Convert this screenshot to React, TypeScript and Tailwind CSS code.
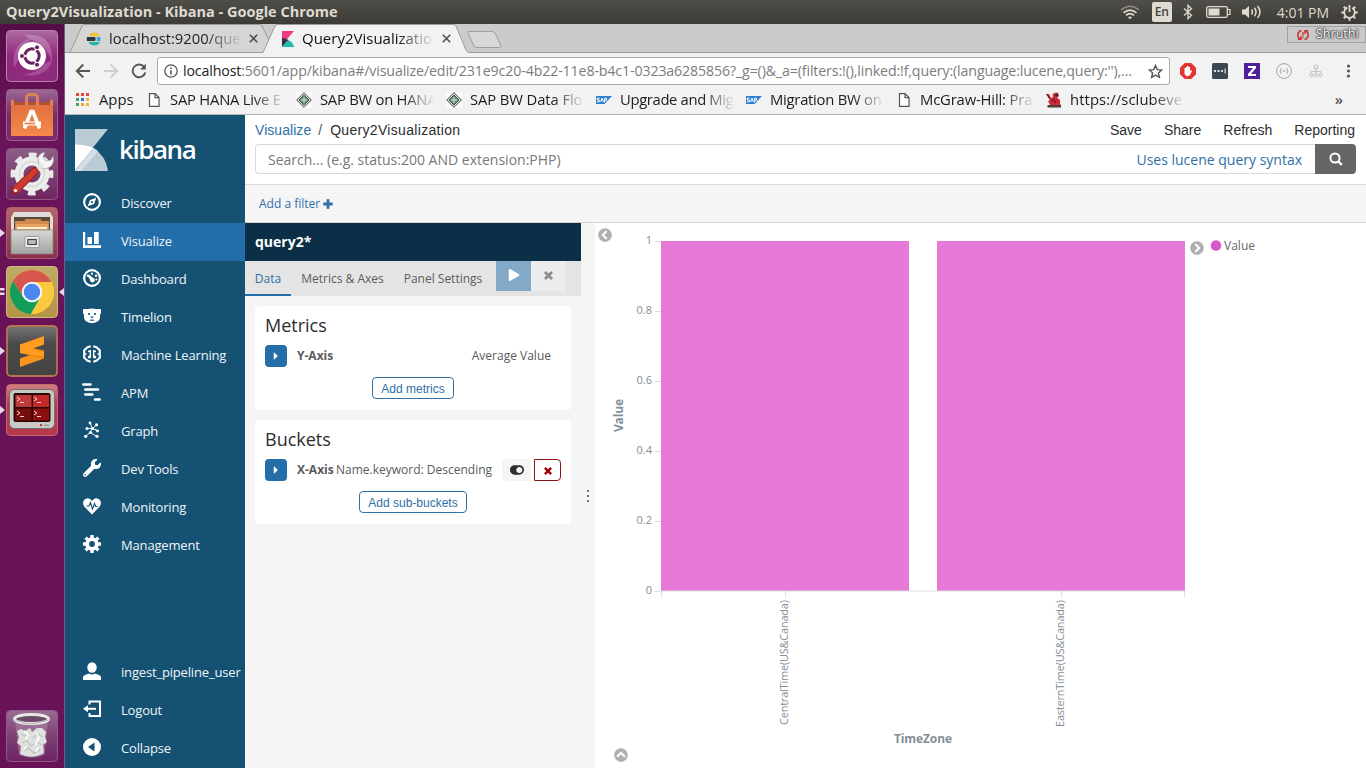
import React from "react";
import {
  FaCaretRight,
  FaChevronCircleLeft,
  FaChevronCircleRight,
  FaChevronCircleUp,
  FaPlay,
  FaToggleOn,
  FaWrench,
} from "react-icons/fa";

const FADE = "[mask-image:linear-gradient(to_right,black_72%,transparent_100%)]";

/* ---------- System bar ---------- */

function SystemBar() {
  return (
    <header className="flex h-6 shrink-0 items-center bg-linear-to-b from-[#504e48] to-[#3d3b36] pr-2 pl-[6px] text-[#dfdbd2]">
      <span className="text-[14.5px] font-bold tracking-[0.01px] whitespace-nowrap">
        Query2Visualization - Kibana - Google Chrome
      </span>
      <div className="ml-auto flex items-center">
        <svg className="mr-[12px] h-[15px] w-5" viewBox="0 0 20 15" fill="none" stroke="currentColor" strokeWidth="1.6">
          <path d="M1 5Q10-2.500 19 5" opacity=".45" />
          <path d="M3.500 7.800Q10 2.300 16.500 7.800" />
          <path d="M6 10.400Q10 6.800 14 10.400" />
          <path d="M8 12.200Q10 10.600 12 12.200L10 14.300Z" fill="currentColor" stroke="none" />
        </svg>
        <span className="mr-[10px] flex h-5 w-5 items-center justify-center rounded-[2px] bg-[#dfdbd2] text-[12px] font-semibold text-[#45433e]">
          En
        </span>
        <svg className="mr-3 h-4 w-3" viewBox="0 0 12 16" fill="none" stroke="currentColor" strokeWidth="1.3">
          <path d="M2 4.500L9.500 11.200L6 14.700V1.300L9.500 4.800L2 11.500" />
        </svg>
        <svg className="mr-[11px] h-3 w-[25px]" viewBox="0 0 25 12">
          <rect x=".7" y=".7" width="20.600" height="10.600" rx="1.500" fill="none" stroke="currentColor" strokeWidth="1.300" />
          <rect x="2.500" y="2.500" width="11" height="7" fill="currentColor" />
          <path d="M22 3.500h2v5h-2" fill="none" stroke="currentColor" strokeWidth="1.200" />
        </svg>
        <svg className="mr-[15px] h-[14px] w-5" viewBox="0 0 20 14" fill="none" stroke="currentColor" strokeWidth="1.500">
          <path d="M0 4.500h3L7 1v12L3 9.500H0Z" fill="currentColor" stroke="none" />
          <path d="M9.500 4.500Q11.500 7 9.500 9.500" />
          <path d="M12.500 2.800Q15.500 7 12.500 11.200" />
          <path d="M15.500 1Q20.500 7 15.500 13" />
        </svg>
        <span className="mr-[12px] text-[14px] tracking-[-0.02px] whitespace-nowrap">4:01 PM</span>
        <svg className="h-[17px] w-[17px]" viewBox="0 0 17 17" fill="none" stroke="currentColor">
          <circle cx="8.500" cy="8.500" r="5.300" strokeWidth="1.800" strokeDasharray="27.700 5.600" transform="rotate(-60 8.500 8.500)" />
          <path d="M8.500 1V8" strokeWidth="1.800" />
          <path
            d="M2.800 2.800L4.500 4.500M14.200 2.800L12.500 4.500M.3 8.500H3M14 8.500H16.700M2.800 14.200L4.500 12.500M14.200 14.200L12.500 12.500M8.500 14V16.700"
            strokeWidth="2"
          />
        </svg>
      </div>
    </header>
  );
}

/* ---------- Launcher ---------- */

function UbuntuTile() {
  return (
    <svg viewBox="0 0 52 52" className="block h-[52px] w-[52px]">
      <defs>
        <linearGradient id="ub" x1="0" y1="0" x2="0" y2="1">
          <stop offset="0" stopColor="#ab6ba0" />
          <stop offset=".5" stopColor="#93277f" />
          <stop offset="1" stopColor="#8d2c7b" />
        </linearGradient>
      </defs>
      <rect x=".5" y=".5" width="51" height="51" rx="4" fill="url(#ub)" stroke="#b685ad" />
      <path d="M8 38Q4 14 26 8Q14 16 13 28Z" fill="#fff" opacity=".2" />
      <path d="M18 5Q48 2 46 32Q40 14 26 10Z" fill="#fff" opacity=".22" />
      <path d="M46 30Q42 48 16 45Q34 42 38 34Z" fill="#fff" opacity=".18" />
      <circle cx="26" cy="26" r="14" fill="#fff" />
      <circle cx="26" cy="26" r="7.200" fill="none" stroke="#6b2360" strokeWidth="3" />
      <path d="M26 26L14 26M26 26L32 15.600M26 26L32 36.400" stroke="#fff" strokeWidth="1.600" />
      <circle cx="26" cy="26" r="5" fill="#fff" />
      <g fill="#6b2360" stroke="#fff" strokeWidth="1">
        <circle cx="16" cy="26" r="2.500" />
        <circle cx="31" cy="17.300" r="2.500" />
        <circle cx="31" cy="34.700" r="2.500" />
      </g>
    </svg>
  );
}

function SoftwareTile() {
  return (
    <svg viewBox="0 0 52 52" className="block h-[52px] w-[52px]">
      <defs>
        <linearGradient id="sw" x1="0" y1="0" x2="0" y2="1">
          <stop offset="0" stopColor="#9a6a94" />
          <stop offset=".5" stopColor="#7a2c68" />
          <stop offset="1" stopColor="#7e2a6a" />
        </linearGradient>
        <linearGradient id="bag" x1="0" y1="0" x2="0" y2="1">
          <stop offset="0" stopColor="#e2703f" />
          <stop offset="1" stopColor="#f58a4b" />
        </linearGradient>
      </defs>
      <rect x=".5" y=".5" width="51" height="51" rx="4" fill="url(#sw)" stroke="#99608c" />
      <path d="M6 10L9 13V18H5V11ZM46 10L43 13V18H47V11Z" fill="#e58255" />
      <path d="M8 13H44V18H8Z" fill="#b2532d" />
      <path d="M5 16H47V46Q47 47 46 47H6Q5 47 5 46Z" fill="url(#bag)" />
      <path d="M20.500 18V9Q20.500 5.500 24 5.500H28Q31.500 5.500 31.500 9V18" fill="none" stroke="#d9815c" strokeWidth="3" />
      <g fill="none" stroke="#fff" strokeWidth="3.600">
        <path d="M18.500 39.500L25 22.500H27L33.500 39.500" />
        <path d="M17 34.500H35" strokeWidth="4" />
      </g>
      <path d="M18.500 34.500H29" stroke="#ee7a41" strokeWidth="1.600" />
    </svg>
  );
}

function SettingsTile() {
  return (
    <svg viewBox="0 0 52 52" className="block h-[52px] w-[52px]">
      <defs>
        <linearGradient id="st" x1="0" y1="0" x2="0" y2="1">
          <stop offset="0" stopColor="#8d5f86" />
          <stop offset="1" stopColor="#6e2460" />
        </linearGradient>
      </defs>
      <rect x=".5" y=".5" width="51" height="51" rx="4" fill="url(#st)" stroke="#8f5884" />
      <circle cx="26" cy="26" r="18.500" fill="none" stroke="#e9e9e9" strokeWidth="6" strokeDasharray="7.300 7.230" transform="rotate(-11 26 26)" />
      <circle cx="26" cy="26" r="13" fill="none" stroke="#ececec" strokeWidth="9" />
      <circle cx="26" cy="26" r="12.500" fill="none" stroke="#cfcfcf" strokeWidth="1" />
      <path d="M37 21L33 17L32 9Q34 5 39 4L37 9L40 13L45 12L47 8Q49 15 44 19Q41 21 37 21Z" fill="#f5f5f5" stroke="#999" strokeWidth=".7" />
      <path d="M35 15L38 19L28 28L25 25Z" fill="#e4e4e4" />
      <path d="M28.500 23.500L9.500 42" stroke="#8d1a15" strokeWidth="8" strokeLinecap="round" />
      <path d="M28.500 23.500L9.500 42" stroke="#cc3a30" strokeWidth="6" strokeLinecap="round" />
      <circle cx="9.500" cy="42.500" r="1.600" fill="#fff" />
    </svg>
  );
}

function FilesTile() {
  return (
    <svg viewBox="0 0 52 52" className="block h-[52px] w-[52px]">
      <defs>
        <linearGradient id="fl" x1="0" y1="0" x2="0" y2="1">
          <stop offset="0" stopColor="#b5666a" />
          <stop offset="1" stopColor="#8b2d4a" />
        </linearGradient>
        <linearGradient id="cab" x1="0" y1="0" x2="0" y2="1">
          <stop offset="0" stopColor="#d6d6d4" />
          <stop offset="1" stopColor="#a3a3a1" />
        </linearGradient>
      </defs>
      <rect x=".5" y=".5" width="51" height="51" rx="4" fill="url(#fl)" stroke="#a8606d" />
      <path d="M8 5H44L47 10V27H5V10Z" fill="#dedddb" />
      <path d="M8 10H44V25H8Z" fill="#5c4a3f" />
      <path d="M9 14H18L20 12H34L36 14H43V24H9Z" fill="#d18a4b" />
      <path d="M10 17H42V25H10Z" fill="#e9a35f" />
      <path d="M11 20H41V22H11Z" fill="#fff0d8" />
      <path d="M5 23H47V47H5Z" fill="url(#cab)" stroke="#818181" strokeWidth=".7" />
      <rect x="19" y="29.500" width="14" height="11" rx="1.500" fill="#f1f1f1" stroke="#8a8a8a" strokeWidth=".8" />
      <rect x="21.800" y="32.500" width="8.500" height="5" fill="#bdbdbd" stroke="#444" strokeWidth="1.200" />
    </svg>
  );
}

function ChromeTile() {
  return (
    <svg viewBox="0 0 52 52" className="block h-[52px] w-[52px]">
      <defs>
        <linearGradient id="cr" x1="0" y1="0" x2="0" y2="1">
          <stop offset="0" stopColor="#bfa968" />
          <stop offset="1" stopColor="#b49447" />
        </linearGradient>
      </defs>
      <rect x=".5" y=".5" width="51" height="51" rx="4" fill="url(#cr)" stroke="#cdbb83" />
      <circle cx="26" cy="26" r="22" fill="#fbc93d" />
      <path d="M26 26L26 16H45.600A22 22 0 0 0 6.950 15L17.300 31Z" fill="#d6564c" />
      <path d="M6.950 15A22 22 0 0 0 25 48L34.700 31L26 36L17.300 31Z" fill="#129d58" />
      <path d="M26 16H45.600A22 22 0 0 1 25 48L34.700 31Z" fill="#fbc93d" />
      <circle cx="26" cy="26" r="10.300" fill="#f4f4f4" />
      <circle cx="26" cy="26" r="8.200" fill="#4a87ee" />
    </svg>
  );
}

function SublimeTile() {
  return (
    <svg viewBox="0 0 52 52" className="block h-[52px] w-[52px]">
      <defs>
        <linearGradient id="sb" x1="0" y1="0" x2="0" y2="1">
          <stop offset="0" stopColor="#757575" />
          <stop offset=".35" stopColor="#4b4b4b" />
          <stop offset="1" stopColor="#434343" />
        </linearGradient>
      </defs>
      <rect x="1" y="1" width="50" height="50" rx="4" fill="url(#sb)" stroke="#b5764f" strokeWidth="1.800" />
      <path d="M14 33.500L38 25V33.500L14 42Z" fill="#f9951e" />
      <path d="M14 20L38 25.500V33.500L14 28Z" fill="#e5820f" />
      <path d="M14 19.500L38 11V19.500L14 28Z" fill="#ff9c22" />
      <path d="M14 20L38 27V32L14 28Z" fill="#ff9c22" />
    </svg>
  );
}

function TerminatorTile() {
  return (
    <svg viewBox="0 0 52 52" className="block h-[52px] w-[52px]">
      <defs>
        <linearGradient id="tm" x1="0" y1="0" x2="0" y2="1">
          <stop offset="0" stopColor="#d08083" />
          <stop offset=".4" stopColor="#b33b49" />
          <stop offset="1" stopColor="#b8384a" />
        </linearGradient>
      </defs>
      <rect x=".5" y=".5" width="51" height="51" rx="4" fill="url(#tm)" stroke="#c8686f" />
      <rect x="3.500" y="5.500" width="45" height="39" rx="5" fill="#c9c9c6" stroke="#6f6f6d" />
      <rect x="7.500" y="9" width="37" height="29" rx="2" fill="#2a0505" />
      <g>
        <rect x="9.500" y="11" width="16" height="12" fill="#c03a3a" />
        <rect x="27" y="11" width="16" height="12" fill="#c22a2a" />
        <rect x="9.500" y="24.500" width="16" height="12" fill="#760d0d" />
        <rect x="27" y="24.500" width="16" height="12" fill="#8d0e0e" />
      </g>
      <g fill="none" stroke="#f3cfcf" strokeWidth="1">
        <path d="M11 13L14 15L11 17M14 18.500H18" />
        <path d="M28 13L31 15L28 17M31 18.500H35" />
        <path d="M11 27L14 29L11 31M14 32.500H18" />
        <path d="M28 27L31 29L28 31M31 32.500H35" />
      </g>
      <circle cx="35" cy="41.200" r="1.100" fill="#e11" />
      <path d="M38 41.200H43" stroke="#888" />
    </svg>
  );
}

function TrashTile() {
  return (
    <svg viewBox="0 0 52 52" className="block h-[52px] w-[52px]">
      <defs>
        <linearGradient id="tr" x1="0" y1="0" x2="0" y2="1">
          <stop offset="0" stopColor="#9b6c93" />
          <stop offset=".5" stopColor="#7d4074" />
          <stop offset="1" stopColor="#6e2462" />
        </linearGradient>
      </defs>
      <rect x=".5" y=".5" width="51" height="51" rx="4" fill="url(#tr)" stroke="#8f5a86" />
      <path d="M9 10H42L38.500 45Q26 50 13 45Z" fill="#a98aa5" opacity=".55" />
      <path
        d="M11 21L15 19L19 21L24 18L26 22L31 18L36 18L40 22L39 27L41 32L37 35L38 43Q26 50 14 44L15 36L11 33L13 27Z"
        fill="#dfe1df"
      />
      <path
        d="M15 24L19 26L23 22M27 28L32 24L37 27M16 33L21 31L25 36L31 32L36 35M18 41L22 38L28 43L34 40"
        fill="none"
        stroke="#bcc1bc"
        strokeWidth="1.100"
      />
      <path d="M18 21L22 24L20 29M30 22L33 28L29 35M20 36L18 40M32 37L30 42" fill="none" stroke="#fff" strokeWidth="1.600" />
      <ellipse cx="25.500" cy="9" rx="17" ry="4.500" fill="#6d4a68" stroke="#e6e6e4" strokeWidth="3" />
      <path d="M8.500 10Q25 17 42.500 10" fill="none" stroke="#b5b5b3" strokeWidth="1" />
    </svg>
  );
}

const TILES = [
  { key: "dash", Tile: UbuntuTile, left: 0, right: false },
  { key: "software", Tile: SoftwareTile, left: 0, right: false },
  { key: "settings", Tile: SettingsTile, left: 0, right: false },
  { key: "files", Tile: FilesTile, left: 1, right: false },
  { key: "chrome", Tile: ChromeTile, left: 2, right: true },
  { key: "sublime", Tile: SublimeTile, left: 1, right: false },
  { key: "terminator", Tile: TerminatorTile, left: 1, right: false },
];

function Launcher() {
  return (
    <aside className="flex w-[65px] shrink-0 flex-col gap-[7px] border-r border-[#7a5a86] bg-linear-to-b from-[#560c47] via-[#6a1359] via-[12%] to-[#6a1257] pt-[6px] pb-[6px] pl-[6px]">
      {TILES.map(({ key, Tile, left, right }) => (
        <div key={key} className="relative">
          <Tile />
          {left === 1 && (
            <svg className="absolute top-[22px] -left-[6px] h-[8px] w-[5px]" viewBox="0 0 5 8">
              <path d="M0 0L5 4L0 8Z" fill="#e6dbe4" />
            </svg>
          )}
          {left === 2 && (
            <svg className="absolute top-[21px] -left-[6px] h-[9px] w-[5px]" viewBox="0 0 5 9">
              <path d="M0 1H4.500V3.500H0ZM0 5.500H4.500V8H0Z" fill="#e6dbe4" />
            </svg>
          )}
          {right && (
            <svg className="absolute top-[22px] left-[53px] h-[8px] w-[5px]" viewBox="0 0 5 8">
              <path d="M5 0L0 4L5 8Z" fill="#e6dbe4" />
            </svg>
          )}
        </div>
      ))}
      <div className="mt-auto">
        <TrashTile />
      </div>
    </aside>
  );
}

/* ---------- Browser chrome ---------- */

function CloseX() {
  return (
    <svg className="h-[9px] w-[9px] shrink-0" viewBox="0 0 9 9" stroke="#505050" strokeWidth="1.600">
      <path d="M.8 .8L8.200 8.200M8.200 .8L.8 8.200" />
    </svg>
  );
}

function TabStrip() {
  return (
    <div className="relative h-[29px] shrink-0 bg-[#cbcbcb]">
      <svg className="absolute inset-0 h-[29px] w-[1301px]" viewBox="0 0 1301 29">
        <path d="M5 28.500L17 2Q18 .5 20 .5H194Q196 .5 197 2L210 28.500Z" fill="#d5d5d5" stroke="#9b9b9b" />
        <path d="M0 28.500H198L210 2Q211 .5 213 .5H388Q390 .5 391 2L401 26Q402 28.500 405 28.500H1301V30H0Z" fill="#f2f2f2" stroke="#9b9b9b" />
        <path d="M0 29H197" stroke="#9b9b9b" />
        <path d="M404 7.500H427Q429 7.500 430 9L436 22Q436.500 23.500 434.500 23.500H412Q410 23.500 409 22L403 9Q402.500 7.500 404 7.500Z" fill="#d8d8d8" stroke="#a0a0a0" />
      </svg>
      <div className="relative flex h-[29px] items-center">
        <svg className="ml-[21px] h-4 w-4 shrink-0" viewBox="0 0 16 16">
          <path d="M2.500 5A6.500 6 0 0 1 14 4.500Q13.500 5.200 12.500 5.200Z" fill="#f0c22f" />
          <path d="M1 6H9Q10.500 8 9 10H1Q.3 8 1 6Z" fill="#30343f" />
          <path d="M10.500 6H14.500V10H10.500Q11.500 8 10.500 6Z" fill="#3ea7da" />
          <path d="M2.500 11H12.500Q13.500 11 14 11.500A6.500 6 0 0 1 2.500 11Z" fill="#29b3a6" />
        </svg>
        <span className={`ml-[7px] w-[133px] shrink-0 overflow-hidden text-[14.8px] whitespace-nowrap text-[#222] ${FADE}`}>
          localhost:9200/que
        </span>
        <span className="ml-[7px] flex">
          <CloseX />
        </span>
        <svg className="ml-[24px] h-4 w-3 shrink-0" viewBox="0 0 12 16">
          <path d="M0 0H12L0 14Z" fill="#ee3a86" />
          <path d="M0 7Q4 7 6.500 9L0 16Z" fill="#343741" />
          <path d="M6.500 9Q11.500 12 12 16H0Z" fill="#22b9a9" />
        </svg>
        <span className={`ml-[8px] w-[132px] shrink-0 overflow-hidden text-[15px] whitespace-nowrap text-[#111] ${FADE}`}>
          Query2Visualizatio
        </span>
        <span className="ml-[8px] flex">
          <CloseX />
        </span>
        <div className="mr-0 ml-auto flex h-[17px] w-[79px] -translate-y-[4px] items-center gap-[7px] border border-[#a2a2a2] bg-[#c9c9c9] pl-[9px]">
          <svg className="h-3 w-3 shrink-0" viewBox="0 0 12 12" fill="none" stroke="#c83a30" strokeWidth="1.600">
            <path d="M4.500 1.500A4.700 4.700 0 0 0 3 10M.8 10.300H4V7.300" />
            <path d="M7.500 10.500A4.700 4.700 0 0 0 9 2M11.200 1.700H8V4.700" />
            <path d="M6 3V7M6 8V9.300" strokeWidth="1.300" />
          </svg>
          <span className="text-[12.5px] whitespace-nowrap text-white [text-shadow:0_0_2px_#222,0_0_2px_#222,0_0_1px_#222]">
            Shruthi
          </span>
        </div>
      </div>
    </div>
  );
}

function Toolbar() {
  return (
    <div className="flex h-[36px] shrink-0 items-center bg-[#f2f2f2] pl-[10px]">
      <svg className="h-4 w-4" viewBox="0 0 16 16" fill="none" stroke="#555" strokeWidth="1.900">
        <path d="M15 8H2M8.300 1.500L1.800 8L8.300 14.500" />
      </svg>
      <svg className="ml-3 h-4 w-4" viewBox="0 0 16 16" fill="none" stroke="#cfcfcf" strokeWidth="1.900">
        <path d="M1 8H14M7.700 1.500L14.200 8L7.700 14.500" />
      </svg>
      <svg className="ml-3 h-4 w-4" viewBox="0 0 16 16" fill="none" stroke="#555" strokeWidth="1.900">
        <path d="M13.200 4A6.400 6.400 0 1 0 14.300 9.500" />
        <path d="M14.800 .8V6.600H9Z" fill="#555" stroke="none" />
      </svg>
      <div className="ml-[10px] flex h-[28px] w-[1013px] items-center rounded-[3px] border border-[#ababab] bg-white">
        <svg className="ml-[6px] h-[14px] w-[14px]" viewBox="0 0 14 14" fill="none" stroke="#555" strokeWidth="1.300">
          <circle cx="7" cy="7" r="6.200" />
          <path d="M7 6.200V10.600M7 3.400V5" strokeWidth="1.600" />
        </svg>
        <span className="ml-[5px] w-[952px] overflow-hidden text-[14.200px] tracking-[-0.13px] whitespace-nowrap text-[#7c7c7c]">
          <span className="text-[#222]">localhost</span>
          {":5601/app/kibana#/visualize/edit/231e9c20-4b22-11e8-b4c1-0323a6285856?_g=()&_a=(filters:!(),linked:!f,query:(language:lucene,query:''),…"}
        </span>
        <svg className="ml-[13px] h-[15px] w-[15px]" viewBox="0 0 15 15" fill="none" stroke="#555" strokeWidth="1.400">
          <path d="M7.500 1.500L9.300 5.600L13.800 6L10.400 9L11.400 13.400L7.500 11.100L3.600 13.400L4.600 9L1.200 6L5.700 5.600Z" />
        </svg>
      </div>
      <div className="ml-[10px] flex w-[177px] items-center gap-4">
        <svg className="h-4 w-4" viewBox="0 0 16 16">
          <path d="M4.800 0H11.200L16 4.800V11.200L11.200 16H4.800L0 11.200V4.800Z" fill="#e4322d" />
          <path d="M4.500 8V5H5.700V4H7V3H8.500V4H10V5V8L11.500 7L12 8L10 12L8 13.300H6.500L4.500 11Z" fill="#fff" />
        </svg>
        <svg className="h-4 w-4" viewBox="0 0 16 16">
          <rect width="16" height="16" rx="1.500" fill="#3b4752" />
          <g fill="#fff">
            <circle cx="3" cy="8" r="1.100" />
            <circle cx="6.500" cy="8" r="1.100" />
            <circle cx="10" cy="8" r="1.100" />
            <rect x="12.600" y="5.500" width="1" height="5" />
          </g>
        </svg>
        <svg className="h-4 w-4" viewBox="0 0 16 16">
          <rect width="16" height="16" fill="#4f1f9e" />
          <path d="M4 3H12V5L7 11H12V13H4V11L9 5H4Z" fill="#fff" />
        </svg>
        <svg className="h-4 w-4" viewBox="0 0 16 16" fill="none" stroke="#a5a5a5" strokeWidth="1">
          <circle cx="8" cy="8" r="7.400" />
          <path d="M5.500 5.500Q4.500 5.500 4.500 7L4 8L4.500 9Q4.500 10.500 5.500 10.500M10.500 5.500Q11.500 5.500 11.500 7L12 8L11.500 9Q11.500 10.500 10.500 10.500M6.500 8H9.500" />
        </svg>
        <svg className="h-4 w-4" viewBox="0 0 16 16" fill="#f2f2f2" stroke="#c6c6c6" strokeWidth="1.200">
          <path d="M8 5V11M3.500 11V8.500H12.500V11" fill="none" />
          <circle cx="8" cy="4" r="1.900" />
          <circle cx="3.500" cy="12" r="1.500" />
          <circle cx="8" cy="12" r="1.500" />
          <circle cx="12.500" cy="12" r="1.500" />
        </svg>
        <svg className="h-4 w-4" viewBox="0 0 16 16" fill="#555">
          <circle cx="8.500" cy="3" r="1.600" />
          <circle cx="8.500" cy="8" r="1.600" />
          <circle cx="8.500" cy="13" r="1.600" />
        </svg>
      </div>
    </div>
  );
}

function FileIcon() {
  return (
    <svg className="h-4 w-4 shrink-0" viewBox="0 0 16 16" fill="#fff" stroke="#555" strokeWidth="1.200">
      <path d="M3.500 1.600H9L13 5.600V14.400H3.500Z" />
      <path d="M9 1.600V5.600H13" fill="none" />
    </svg>
  );
}

function DiamondIcon() {
  return (
    <svg className="h-4 w-4 shrink-0" viewBox="0 0 16 16">
      <rect width="16" height="16" fill="#fafafa" />
      <path d="M8 .7L15.300 8L8 15.300L.7 8Z" fill="#dde3dd" stroke="#444" strokeWidth="1" />
      <path d="M8 3L13 8L8 13L3 8Z" fill="#5f8f70" stroke="#333" strokeWidth=".8" />
      <path d="M5 8H11M8 5V11" stroke="#dfe9df" strokeWidth="1" />
    </svg>
  );
}

function SapIcon() {
  return (
    <svg className="h-4 w-4 shrink-0" viewBox="0 0 16 16">
      <path d="M0 4H16L8.500 12H0Z" fill="#2f7fd0" />
      <path d="M1 9.800H3.300V8H1.300V6.200H3.600M4.600 10L6 6.200L7.400 10M8.400 10.500V6.200H10.500V8.300H8.400" fill="none" stroke="#fff" strokeWidth="1" />
    </svg>
  );
}

function KnightIcon() {
  return (
    <svg className="h-4 w-4 shrink-0" viewBox="0 0 16 16">
      <path d="M0 2L3 2L5 6L7 5L6.500 2L9 .5H12L13 4L11 5.500L14 8V12L15 13H4L2 9L4 8Z" fill="#cf2a35" />
      <path d="M9 2H12V4.500H9.500Z" fill="#3a2a2a" />
      <path d="M8 2L9 .5H12" stroke="#e9b7a0" strokeWidth=".8" fill="none" />
      <path d="M1 2L4 7M5 9L8 8L10 11" stroke="#5b1a1f" strokeWidth="1.100" fill="none" />
      <path d="M1.500 13H15V15.500H1.500Z" fill="#4d3f3f" />
    </svg>
  );
}

const BOOKMARKS = [
  { label: "SAP HANA Live E", Icon: FileIcon, cls: "tracking-[-0.22px]" },
  { label: "SAP BW on HANA", Icon: DiamondIcon, cls: "tracking-[-0.25px]" },
  { label: "SAP BW Data Flo", Icon: DiamondIcon, cls: "tracking-[-0.1px]" },
  { label: "Upgrade and Mig", Icon: SapIcon, cls: "tracking-[-0.35px]" },
  { label: "Migration BW on", Icon: SapIcon, cls: "tracking-[-0.25px]" },
  { label: "McGraw-Hill: Pra", Icon: FileIcon, cls: "tracking-[-0.15px]" },
  { label: "https://sclubeve", Icon: KnightIcon, cls: "tracking-[0.1px]" },
];

const APP_DOTS = ["#e0463a", "#e0463a", "#e0463a", "#3fa45a", "#3b6fd4", "#eab73a", "#3fa45a", "#e8a53a", "#eab73a"];

function BookmarksBar() {
  return (
    <div className="flex h-[26px] shrink-0 items-center border-b border-[#b4b4b4] bg-[#f2f2f2] pb-[4px] text-[14.8px] text-[#1c1c1c]">
      <div className="flex w-[81px] shrink-0 items-center pl-[11px]">
        <div className="grid grid-cols-3 gap-[2px]">
          {APP_DOTS.map((c, i) => (
            <span key={i} className="h-[3px] w-[3px]" style={{ background: c }} />
          ))}
        </div>
        <span className="ml-[10px]">Apps</span>
      </div>
      {BOOKMARKS.map(({ label, Icon, cls }) => (
        <div key={label} className="flex w-[150px] shrink-0 items-center gap-2">
          <Icon />
          <span className={`w-[115px] overflow-hidden whitespace-nowrap ${cls} ${FADE}`}>{label}</span>
        </div>
      ))}
      <span className="mr-[23px] ml-auto text-[15px] font-semibold text-[#555]">»</span>
    </div>
  );
}

/* ---------- Kibana navigation ---------- */

const ico = "h-[18px] w-[18px]";

function CompassIcon() {
  return (
    <svg className={ico} viewBox="0 0 18 18">
      <circle cx="9" cy="9" r="7.900" fill="none" stroke="#fff" strokeWidth="2.200" />
      <path d="M13.300 4.700L11 11L4.700 13.300L7 7Z" fill="#fff" />
      <circle cx="9" cy="9" r="1.100" fill="#155173" />
    </svg>
  );
}
function BarsIcon() {
  return (
    <svg className={ico} viewBox="0 0 18 18" fill="#fff">
      <path d="M0 1H2.200V14.300H18V17H0Z" />
      <path d="M4.500 6H9V13H4.500ZM11 1H15.700V13H11Z" />
    </svg>
  );
}
function GaugeIcon() {
  return (
    <svg className={ico} viewBox="0 0 18 18">
      <circle cx="9" cy="9" r="7.900" fill="none" stroke="#fff" strokeWidth="2.200" />
      <g fill="#fff">
        <circle cx="9" cy="4.700" r="1.100" />
        <circle cx="5" cy="6.800" r="1.200" />
        <circle cx="13" cy="6.800" r="1.200" />
        <circle cx="13.300" cy="10.500" r="1" />
        <circle cx="9.500" cy="11.300" r="2.200" />
        <path d="M4.500 6.500L6 5.500L11.500 10L8 12.500Z" />
      </g>
    </svg>
  );
}
function BearIcon() {
  return (
    <svg className={ico} viewBox="0 0 18 18">
      <path d="M1 2H5Q9 1 13 2H17Q18 2 18 3V6Q18 7 17 7.500Q17.500 13 14.500 14.500Q9 18 3.500 14.500Q.5 13 1 7.500Q0 7 0 6V3Q0 2 1 2Z" fill="#fff" />
      <g fill="#155173">
        <circle cx="6" cy="7" r="1.100" />
        <circle cx="12" cy="7" r="1.100" />
        <path d="M7.300 9.500H10.700L9 11.500Z" />
        <path d="M6.300 13.800Q9 11 11.700 13.800Z" />
      </g>
    </svg>
  );
}
function BrainIcon() {
  return (
    <svg className={ico} viewBox="0 0 18 18" fill="none" stroke="#fff" strokeWidth="2.100">
      <path d="M7.700 1.300L4.500 2.300L1.200 5.300V12.700L4.500 15.700L7.700 16.700" strokeLinejoin="round" />
      <path d="M10.300 1.300L13.500 2.300L16.800 5.300V12.700L13.500 15.700L10.300 16.700" strokeLinejoin="round" />
      <path d="M7.300 5V12.500M7.500 6L5 6.500M1.200 9H3.500M10.700 5V12.500M10.500 6L13 6.500M16.800 9H14.500" strokeWidth="1.500" />
      <g fill="#fff" stroke="none">
        <circle cx="6.300" cy="12" r="1.500" />
        <circle cx="11.700" cy="12" r="1.500" />
      </g>
    </svg>
  );
}
function ApmIcon() {
  return (
    <svg className="h-[18px] w-[19px] -translate-x-px" viewBox="0 0 19 18" stroke="#fff" strokeWidth="2.500" strokeLinecap="round">
      <path d="M1.300 1.500H8.500M3.300 6.500H16M3.300 11.500H10.300M13 16.500H17.700" />
    </svg>
  );
}
function GraphIcon() {
  return (
    <svg className={ico} viewBox="0 0 18 18" fill="#fff">
      <path d="M7 2L9.500 7.500L4 7.500M9.500 7.500L13.500 4M9.500 7.500L14.500 10L12 8M9.500 7.500L7 11.500L2.800 15.300M7 11.500L13.800 15.300" stroke="#fff" strokeWidth=".9" fill="none" />
      <circle cx="7" cy="2" r="1.400" />
      <circle cx="13.500" cy="3.800" r="1.600" />
      <circle cx="4" cy="7.500" r="1.500" />
      <circle cx="9.500" cy="7.500" r="1.600" />
      <circle cx="14.500" cy="10" r="1.400" />
      <circle cx="7.500" cy="11.500" r="1.600" />
      <circle cx="2.700" cy="15.300" r="1.600" />
      <circle cx="14" cy="15.300" r="1.600" />
    </svg>
  );
}
function WrenchIcon() {
  return <FaWrench className="h-[18px] w-[18px] text-white" />;
}
function HeartIcon() {
  return (
    <svg className={ico} viewBox="0 0 18 18">
      <path d="M9 17.500L1.200 9.500Q-1 6 1 3.200Q3 .8 6 1.500Q8 2 9 4Q10 2 12 1.500Q15 .8 17 3.200Q19 6 16.800 9.500Z" fill="#fff" />
      <path d="M3.500 9H6L7.500 5.500L9.500 12L11.500 6.500L12.700 9.500H14.500" fill="none" stroke="#155173" strokeWidth="1.100" />
    </svg>
  );
}
function GearIcon() {
  return (
    <svg className={ico} viewBox="0 0 18 18" fill="none" stroke="#fff">
      <circle cx="9" cy="9" r="4.800" strokeWidth="3.800" />
      <g strokeWidth="3.400">
        <path d="M9 0V3M9 15V18M0 9H3M15 9H18" />
        <path d="M2.600 2.600L4.700 4.700M13.300 13.300L15.400 15.400M2.600 15.400L4.700 13.300M13.300 4.700L15.400 2.600" />
      </g>
    </svg>
  );
}
function UserIcon() {
  return (
    <svg className={ico} viewBox="0 0 18 18" fill="#fff">
      <ellipse cx="9" cy="5.500" rx="4.700" ry="5.300" />
      <path d="M0 18V15.500Q0 13.500 2 13L6 11.500Q9 13.500 12 11.500L16 13Q18 13.500 18 15.500V18Z" />
    </svg>
  );
}
function LogoutIcon() {
  return (
    <svg className={ico} viewBox="0 0 18 18" fill="none" stroke="#fff" strokeWidth="2">
      <path d="M6.500 4.500V1.500H17V16H6.500V13" />
      <path d="M3 8.800H13" />
      <path d="M0 8.800L5 5.300V12.300Z" fill="#fff" stroke="none" />
    </svg>
  );
}
function CollapseIcon() {
  return (
    <svg className={ico} viewBox="0 0 18 18">
      <circle cx="9" cy="9" r="9" fill="#fff" />
      <path d="M11.500 4.500V13.500L5 9Z" fill="#155173" />
    </svg>
  );
}

const NAV = [
  { label: "Discover", Icon: CompassIcon },
  { label: "Visualize", Icon: BarsIcon, active: true },
  { label: "Dashboard", Icon: GaugeIcon },
  { label: "Timelion", Icon: BearIcon },
  { label: "Machine Learning", Icon: BrainIcon },
  { label: "APM", Icon: ApmIcon },
  { label: "Graph", Icon: GraphIcon },
  { label: "Dev Tools", Icon: WrenchIcon },
  { label: "Monitoring", Icon: HeartIcon },
  { label: "Management", Icon: GearIcon },
];

const NAV_BOTTOM = [
  { label: "ingest_pipeline_user", Icon: UserIcon },
  { label: "Logout", Icon: LogoutIcon },
  { label: "Collapse", Icon: CollapseIcon },
];

function NavItem({ label, Icon, active }: { label: string; Icon: React.ComponentType; active?: boolean }) {
  return (
    <a className={`flex h-[38px] items-center ${active ? "bg-[#236ea8]" : ""}`}>
      <span className="mb-1 ml-[18px] flex w-[19px] justify-start">
        <Icon />
      </span>
      <span className="ml-[19px] text-[13px] tracking-[-0.17px] whitespace-nowrap text-[#eef4f8]">{label}</span>
    </a>
  );
}

function KibanaNav() {
  return (
    <nav className="flex w-[180px] shrink-0 flex-col bg-[#155173]">
      <div className="flex h-[70px] items-start pt-[14px] pl-[10px]">
        <svg className="h-[42px] w-[33px]" viewBox="0 0 33 42">
          <path d="M0 0H33L0 41Z" fill="#b9cbd5" />
          <path d="M0 15.500Q11 15.500 18.500 19L0 41.500Z" fill="#fff" />
          <path d="M0 42L18.500 19Q31 27 33 42Z" fill="#b9cbd5" />
          <path d="M0 42L18.500 19L23 22L6 42Z" fill="#d5e0e6" />
        </svg>
        <span className="ml-[11px] text-[26px] leading-10 font-semibold tracking-[-1.45px] text-white">kibana</span>
      </div>
      {NAV.map((n) => (
        <NavItem key={n.label} {...n} />
      ))}
      <div className="mt-auto">
        {NAV_BOTTOM.map((n) => (
          <NavItem key={n.label} {...n} />
        ))}
      </div>
    </nav>
  );
}

/* ---------- Visualize page ---------- */

function TopNav() {
  return (
    <div className="h-[70px] shrink-0 border-b border-[#d9d9d9] bg-white px-[10px]">
      <div className="flex h-[29px] items-center pt-[2px] font-['Liberation_Sans',sans-serif] text-[14px] text-[#2d2d2d]">
        <span className="tracking-[0.05px] text-[#2f70a8]">Visualize</span>
        <span className="mr-[8px] ml-[7px] text-[#555]">/</span>
        <span className="tracking-[0.32px]">Query2Visualization</span>
        <div className="mr-px ml-auto flex gap-[22px]">
          <span>Save</span>
          <span>Share</span>
          <span>Refresh</span>
          <span>Reporting</span>
        </div>
      </div>
      <div className="flex h-[30px]">
        <div className="flex flex-1 items-center justify-between rounded-l border border-r-0 border-[#d9d9d9] pr-[13px] pl-[12px]">
          <span className="text-[14px] text-[#777]">Search... (e.g. status:200 AND extension:PHP)</span>
          <span className="text-[14px] text-[#2f70a8]">Uses lucene query syntax</span>
        </div>
        <button className="flex w-[41px] items-center justify-center rounded-r bg-[#666] text-white">
          <svg className="h-[14px] w-[14px]" viewBox="0 0 14 14" fill="none" stroke="currentColor">
            <circle cx="6" cy="6" r="4.600" strokeWidth="2" />
            <path d="M9.300 9.300L12.800 12.800" strokeWidth="2.400" />
          </svg>
        </button>
      </div>
    </div>
  );
}

function CrossIcon({ className }: { className: string }) {
  return (
    <svg className={className} viewBox="0 0 10 10" fill="none" stroke="currentColor" strokeWidth="3">
      <path d="M1.100 1.100L8.900 8.900M8.900 1.100L1.100 8.900" />
    </svg>
  );
}

function ExpandButton() {
  return (
    <button className="flex h-[22px] w-[22px] items-center justify-center rounded bg-[#236ea8] text-white">
      <FaCaretRight className="h-3 w-3" />
    </button>
  );
}

function OutlineButton({ children, className }: { children: React.ReactNode; className: string }) {
  return (
    <button
      className={`mx-auto flex h-[22px] items-center justify-center rounded border border-[#2f70a8] pt-px font-['Liberation_Sans',sans-serif] text-[12px] text-[#2f70a8] ${className}`}
    >
      {children}
    </button>
  );
}

function Editor() {
  return (
    <section className="flex w-[350px] shrink-0 bg-[#f5f5f5]">
      <div className="w-[336px]">
        <div className="flex h-[38px] items-center bg-[#0b2f46] pb-[2px] pl-[10px] text-[14px] font-bold text-white">query2*</div>
        <div className="flex h-[35px] bg-[#e4e4e4] text-[12px] text-[#5c5c5c]">
          <span className="flex w-[46px] items-center justify-center border-b-2 border-[#236ea8] pt-[2px] text-[#2f70a8]">Data</span>
          <span className="flex w-[103px] items-center justify-center whitespace-nowrap">Metrics &amp; Axes</span>
          <span className="flex w-[102px] items-center justify-center pr-[4px] whitespace-nowrap">Panel Settings</span>
          <button className="flex h-[30px] w-[35px] items-center justify-center bg-[#82a9c8] pb-[2px] text-white">
            <FaPlay className="h-3 w-3" />
          </button>
          <button className="flex h-[30px] w-[35px] items-center justify-center bg-[#ececec] pb-[2px] text-[#8c8c8c]">
            <CrossIcon className="h-[9px] w-[9px]" />
          </button>
        </div>
        <div className="flex flex-col gap-[10px] p-[10px]">
          <div className="h-[104px] rounded bg-white px-[10px] pt-[6px]">
            <h2 className="h-[33px] text-[18px] leading-[27px] text-[#2d2d2d]">Metrics</h2>
            <div className="flex items-center text-[12px] text-[#5a5a5a]">
              <ExpandButton />
              <span className="ml-[10px] font-bold">Y-Axis</span>
              <span className="mr-[10px] ml-auto">Average Value</span>
            </div>
            <OutlineButton className="mt-[10px] w-[82px]">Add metrics</OutlineButton>
          </div>
          <div className="h-[104px] rounded bg-white px-[10px] pt-[6px]">
            <h2 className="h-[33px] text-[18px] leading-[27px] text-[#2d2d2d]">Buckets</h2>
            <div className="flex items-center text-[12px] whitespace-nowrap text-[#5a5a5a]">
              <ExpandButton />
              <span className="ml-[10px] w-[38px] font-bold">X-Axis</span>
              <span className="ml-px">Name.keyword: Descending</span>
              <span className="ml-auto flex h-[22px] w-[29px] items-center justify-center rounded-l bg-[#f5f5f5] text-[#2d2d2d]">
                <FaToggleOn className="h-[14px] w-[14px]" />
              </span>
              <span className="ml-[3px] flex h-[22px] w-[27px] items-center justify-center rounded-r border border-[#8b1515] pt-[2px] text-[#a30000]">
                <CrossIcon className="h-2 w-2" />
              </span>
            </div>
            <OutlineButton className="mt-[10px] w-[108px]">Add sub-buckets</OutlineButton>
          </div>
        </div>
      </div>
      <div className="flex w-[14px] flex-col items-center justify-center gap-[3px]">
        <span className="h-[2px] w-[2px] bg-[#777]" />
        <span className="h-[2px] w-[2px] bg-[#777]" />
        <span className="h-[2px] w-[2px] bg-[#777]" />
      </div>
    </section>
  );
}

const Y_TICKS = [
  { v: "1", y: 18 },
  { v: "0.8", y: 88 },
  { v: "0.6", y: 158 },
  { v: "0.4", y: 228 },
  { v: "0.2", y: 298 },
  { v: "0", y: 368 },
];

function Chart() {
  return (
    <section className="relative flex-1 bg-white">
      <svg className="block h-[545px] w-[771px]" viewBox="0 0 771 545" fontSize="11" fill="#848e96">
        <rect x="66" y="18" width="248" height="350" fill="#e77ad8" />
        <rect x="342" y="18" width="248" height="350" fill="#e77ad8" />
        <path d="M66.500 368V374M66 368H590M190.500 368V374M466.500 368V374M589.500 368V374" stroke="#ddd" fill="none" />
        {Y_TICKS.map((t) => (
          <g key={t.v}>
            <path d={`M60 ${t.y + 0.5}H66`} stroke="#ddd" />
            <text x="57" y={t.y + 3} textAnchor="end">
              {t.v}
            </text>
          </g>
        ))}
        <text transform="translate(193 502) rotate(-90)" textLength="125">
          CentralTime(US&amp;Canada)
        </text>
        <text transform="translate(469 504) rotate(-90)" textLength="127">
          EasternTime(US&amp;Canada)
        </text>
        <text transform="translate(28 209) rotate(-90)" fontWeight="700" fontSize="12" textLength="33">
          Value
        </text>
        <text x="299" y="520" fontWeight="700" fontSize="12" textLength="58">
          TimeZone
        </text>
        <circle cx="621" cy="22.500" r="5.300" fill="#da58cb" />
        <text x="629" y="27" fontSize="12" fill="#666" textLength="31">
          Value
        </text>
      </svg>
      <FaChevronCircleLeft className="absolute top-[5px] left-[3px] h-[14px] w-[14px] text-[#b0b0b0]" />
      <FaChevronCircleRight className="absolute top-[18px] left-[595px] h-[14px] w-[14px] text-[#b0b0b0]" />
      <FaChevronCircleUp className="absolute top-[525px] left-[19px] h-[14px] w-[14px] text-[#b0b0b0]" />
    </section>
  );
}

export default function App() {
  return (
    <div className="flex h-[768px] w-[1366px] flex-col overflow-hidden bg-white font-['Open_Sans','Noto_Sans',sans-serif]">
      <SystemBar />
      <div className="flex min-h-0 flex-1">
        <Launcher />
        <div className="flex min-w-0 flex-1 flex-col">
          <TabStrip />
          <Toolbar />
          <BookmarksBar />
          <div className="flex min-h-0 flex-1">
            <KibanaNav />
            <main className="flex min-w-0 flex-1 flex-col">
              <TopNav />
              <div className="flex h-[38px] shrink-0 items-center gap-[3px] border-b border-[#d4d4d4] bg-[#f5f5f5] pl-[14px] text-[12px] text-[#2f70a8]">
                <span>Add a filter</span>
                <svg className="h-[10px] w-[10px]" viewBox="0 0 10 10" stroke="currentColor" strokeWidth="2.800">
                  <path d="M5 .3V9.700M.3 5H9.700" />
                </svg>
              </div>
              <div className="flex min-h-0 flex-1">
                <Editor />
                <Chart />
              </div>
            </main>
          </div>
        </div>
      </div>
    </div>
  );
}
